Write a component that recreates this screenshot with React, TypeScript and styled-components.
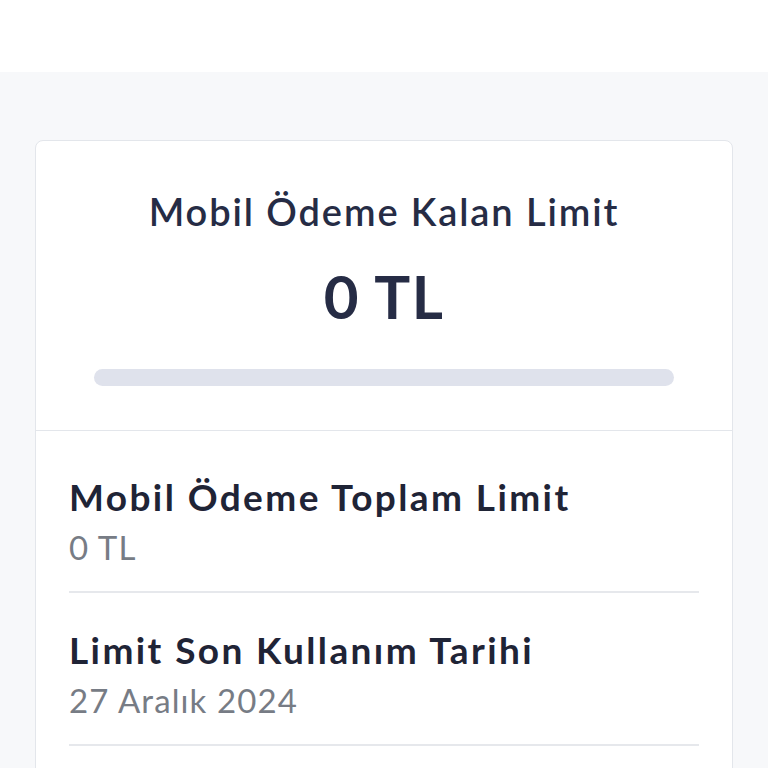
import React from 'react';
import styled, { createGlobalStyle } from 'styled-components';

const GlobalStyle = createGlobalStyle`
  html, body {
    margin: 0;
    padding: 0;
    background: #f7f8fa;
    font-family: Lato, "Open Sans", sans-serif;
  }
`;

const Page = styled.div`
  min-height: 768px;
  background: #f7f8fa;
`;

const TopBar = styled.div`
  height: 72px;
  background: #ffffff;
`;

const Content = styled.div`
  padding: 68px 35px 0;
`;

const Card = styled.div`
  background: #ffffff;
  border: 1px solid #e3e6eb;
  border-radius: 8px;
`;

const Summary = styled.div`
  display: flex;
  flex-direction: column;
  align-items: center;
  padding: 44px 58px 44px;
  border-bottom: 1px solid #e3e6eb;
`;

const SummaryTitle = styled.div`
  font-size: 38px;
  line-height: 52px;
  font-weight: 600;
  letter-spacing: 1.9px;
  color: #262c45;
`;

const SummaryValue = styled.div`
  margin-top: 25px;
  font-size: 60px;
  line-height: 68px;
  font-weight: 700;
  letter-spacing: 1.5px;
  color: #262c45;
`;

const Track = styled.div`
  align-self: stretch;
  margin-top: 39px;
  height: 17px;
  border-radius: 9px;
  background: #dfe2ec;
`;

const Fill = styled.div`
  height: 100%;
  border-radius: 9px;
  background: #262c45;
`;

const Details = styled.div`
  padding: 42px 33px 0;
`;

const Row = styled.div`
  padding-bottom: 20px;
  margin-bottom: 33px;
  border-bottom: 2px solid #e6e8ec;
`;

const RowLabel = styled.div`
  font-size: 37px;
  line-height: 48px;
  font-weight: 700;
  letter-spacing: 2.4px;
  color: #1f2436;
`;

const RowValue = styled.div`
  margin-top: 2px;
  font-size: 33px;
  line-height: 48px;
  font-weight: 400;
  letter-spacing: 1.1px;
  color: #777c85;
`;

const rows = [
  { label: 'Mobil Ödeme Toplam Limit', value: '0 TL' },
  { label: 'Limit Son Kullanım Tarihi', value: '27 Aralık 2024' },
];

export default function App() {
  const used = 0;
  const total = 0;
  const pct = total > 0 ? (used / total) * 100 : 0;
  return (
    <Page>
      <GlobalStyle />
      <TopBar />
      <Content>
        <Card>
          <Summary>
            <SummaryTitle>Mobil Ödeme Kalan Limit</SummaryTitle>
            <SummaryValue>0 TL</SummaryValue>
            <Track>
              <Fill style={{ width: `${pct}%` }} />
            </Track>
          </Summary>
          <Details>
            {rows.map((r) => (
              <Row key={r.label}>
                <RowLabel>{r.label}</RowLabel>
                <RowValue>{r.value}</RowValue>
              </Row>
            ))}
          </Details>
        </Card>
      </Content>
    </Page>
  );
}
